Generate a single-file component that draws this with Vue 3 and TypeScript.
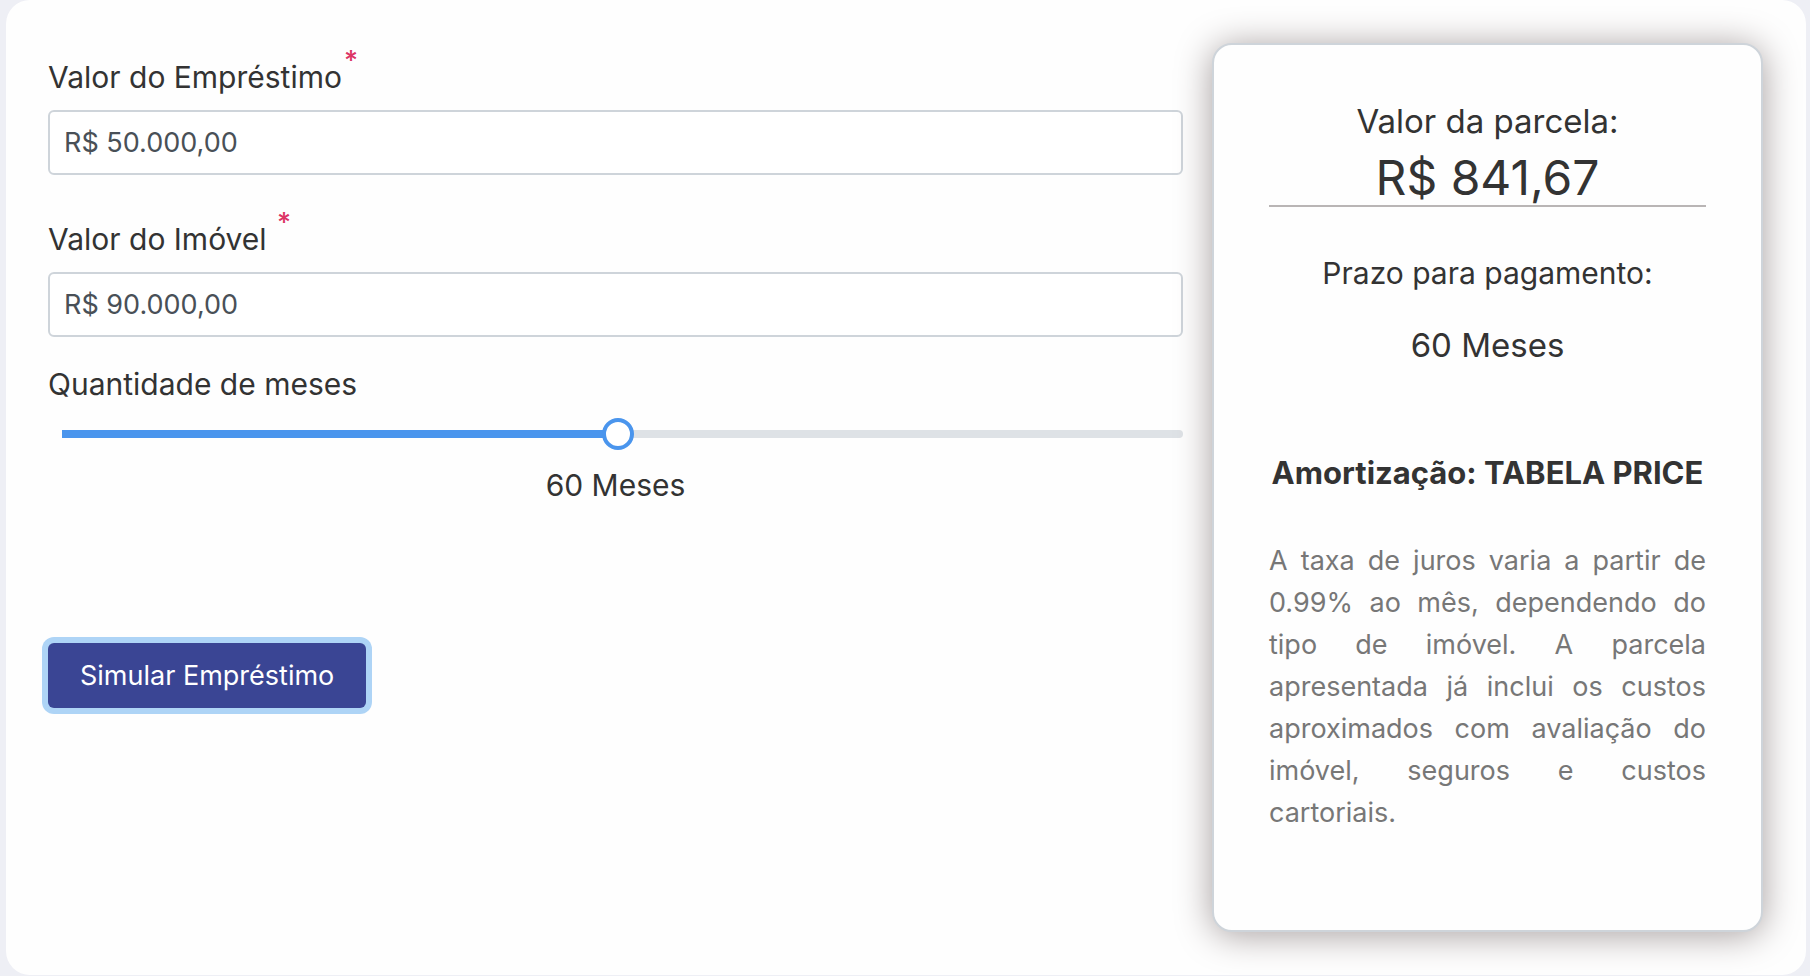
<script setup lang="ts">
import { computed, ref } from 'vue'

const loan = ref('R$ 50.000,00')
const property = ref('R$ 90.000,00')
const minMonths = 1
const maxMonths = 120
const months = ref(60)
const installment = ref('R$ 841,67')

const progress = computed(() => `${((months.value - minMonths) / (maxMonths - minMonths)) * 100}%`)
</script>

<template>
  <main class="card">
    <form class="form" @submit.prevent>
      <div class="field">
        <label class="label" for="loan">Valor do Empréstimo<sup class="required">*</sup></label>
        <input id="loan" v-model="loan" class="input" type="text" />
      </div>
      <div class="field">
        <label class="label" for="property">Valor do Imóvel <sup class="required">*</sup></label>
        <input id="property" v-model="property" class="input" type="text" />
      </div>
      <div class="months">
        <label class="label" for="months">Quantidade de meses</label>
        <input
          id="months"
          v-model.number="months"
          class="slider"
          type="range"
          :min="minMonths"
          :max="maxMonths"
          :style="{ '--progress': progress }"
        />
        <output class="months-value" for="months">{{ months }} Meses</output>
      </div>
      <button class="submit" type="submit">Simular Empréstimo</button>
    </form>

    <aside class="summary">
      <p class="caption large">Valor da parcela:</p>
      <p class="amount">{{ installment }}</p>
      <p class="caption">Prazo para pagamento:</p>
      <p class="term large">{{ months }} Meses</p>
      <h2 class="method">Amortização: TABELA PRICE</h2>
      <p class="note">
        A taxa de juros varia a partir de 0.99% ao mês, dependendo do tipo de imóvel. A parcela
        apresentada já inclui os custos aproximados com avaliação do imóvel, seguros e custos
        cartoriais.
      </p>
    </aside>
  </main>
</template>

<style>
body {
  margin: 0;
  background: #eeeff5;
}
</style>

<style scoped>
* {
  box-sizing: border-box;
}

.card {
  display: grid;
  grid-template-columns: minmax(0, 1135fr) minmax(0, 551fr);
  gap: 29px;
  align-items: start;
  margin: 0 4px 1px 6px;
  padding: 43px 43px 43px 42px;
  border-radius: 24px;
  background: #fefefe;
  color: #333;
  font-family: Inter, "Noto Sans", sans-serif;
  font-size: 30px;
  line-height: 46px;
}

.form {
  display: flex;
  flex-direction: column;
  align-items: flex-start;
  padding-top: 11px;
}

.field {
  display: flex;
  flex-direction: column;
  gap: 10px;
  width: 100%;
  margin-bottom: 41px;
}

.field + .field {
  margin-bottom: 24px;
}

.label {
  white-space: pre;
}

.required {
  padding-left: 2px;
  color: #dc3565;
  font-size: 27px;
  font-weight: 500;
  line-height: 0;
  vertical-align: 18px;
}

.input {
  width: 100%;
  height: 65px;
  padding: 0 14px;
  border: 2px solid #ced4da;
  border-radius: 6px;
  outline: 0;
  background: #fff;
  color: #495057;
  font: inherit;
  font-size: 27px;
}

.months {
  display: flex;
  flex-direction: column;
  width: 100%;
}

.slider {
  appearance: none;
  height: 32px;
  margin: 11px 0 12px 14px;
  background: transparent;
}

.slider::-webkit-slider-runnable-track {
  height: 8px;
  border-radius: 0 4px 4px 0;
  background: linear-gradient(#4a95ed, #4a95ed) 0 / var(--progress) 100% no-repeat #dee2e6;
}

.slider::-webkit-slider-thumb {
  appearance: none;
  width: 32px;
  height: 32px;
  margin-top: -12px;
  border: 4px solid #4a95ed;
  border-radius: 50%;
  background: #fff;
}

.months-value {
  text-align: center;
}

.submit {
  height: 65px;
  margin-top: 135px;
  padding: 0 32px;
  border: 0;
  border-radius: 6px;
  background: #3a4594;
  box-shadow: 0 0 0 6px #aed4f6;
  color: #fff;
  font: inherit;
  font-size: 27px;
}

.summary {
  padding: 53px 55px 96px;
  border: 2px solid #ced4da;
  border-radius: 20px;
  background: #fefefe;
  box-shadow: 0 3px 36px #a69e9e;
  text-align: center;
}

.summary p,
.summary h2 {
  margin: 0;
}

.summary .amount {
  padding-top: 7px;
  border-bottom: 2px solid #b9b5b5;
  font-size: 48px;
  line-height: 54px;
}

.summary .caption + .term {
  margin-top: 26px;
}

.summary .amount + .caption {
  margin-top: 43px;
}

.summary .method {
  margin-top: 82px;
  font-size: 31px;
  font-weight: 700;
  white-space: nowrap;
}

.summary .large {
  font-size: 33px;
}

.summary .note {
  margin-top: 44px;
  color: #777;
  font-size: 27px;
  line-height: 42px;
  text-align: justify;
}
</style>
